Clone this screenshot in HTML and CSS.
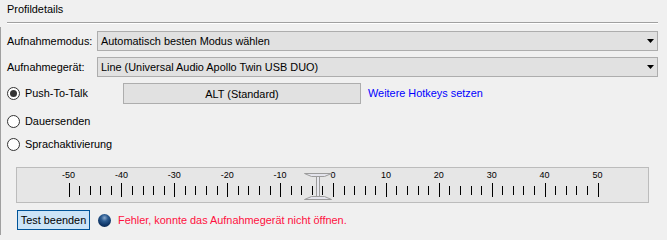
FILE: index.html
```html
<!DOCTYPE html>
<html lang="de">
<head>
<meta charset="utf-8">
<title>Profildetails</title>
<link rel="stylesheet" href="styles.css">
</head>
<body>
<div class="window">
  <div class="group-title">Profildetails</div>
  <div class="group-body">
    <div class="field-row">
      <span class="field-label">Aufnahmemodus:</span>
      <div class="combo">
        <span class="combo-text">Automatisch besten Modus wählen</span>
        <svg class="combo-arrow" width="7" height="4" viewBox="0 0 7 4"><path d="M0 0H7L3.5 4Z" fill="#000"/></svg>
      </div>
    </div>
    <div class="field-row">
      <span class="field-label">Aufnahmegerät:</span>
      <div class="combo">
        <span class="combo-text">Line (Universal Audio Apollo Twin USB DUO)</span>
        <svg class="combo-arrow" width="7" height="4" viewBox="0 0 7 4"><path d="M0 0H7L3.5 4Z" fill="#000"/></svg>
      </div>
    </div>
    <div class="radio-row ptt">
      <label class="radio"><span class="radio-circle checked"></span>Push-To-Talk</label>
      <button class="hotkey-btn" type="button">ALT (Standard)</button>
      <a class="link" href="#">Weitere Hotkeys setzen</a>
    </div>
    <div class="radio-row cont">
      <label class="radio"><span class="radio-circle"></span>Dauersenden</label>
    </div>
    <div class="radio-row voice">
      <label class="radio"><span class="radio-circle"></span>Sprachaktivierung</label>
    </div>
    <div class="meter">
      <svg class="scale" width="631" height="34" viewBox="0 0 631 34">
        <g class="scale-labels" font-size="9" text-anchor="middle" fill="#000">
          <text x="51.5" y="10">-50</text>
          <text x="104.4" y="10">-40</text>
          <text x="157.3" y="10">-30</text>
          <text x="210.2" y="10">-20</text>
          <text x="263.1" y="10">-10</text>
          <text x="316" y="10">0</text>
          <text x="368.9" y="10">10</text>
          <text x="421.8" y="10">20</text>
          <text x="474.7" y="10">30</text>
          <text x="527.6" y="10">40</text>
          <text x="580.5" y="10">50</text>
        </g>
        <g id="ticks" stroke="#000" stroke-width="1"></g>
        <g class="slider">
          <path d="M287.5 5.5H314.5L307.5 8.5H294.5Z" fill="#e4e4ec" stroke="#9c9c9c"/>
          <rect x="299.5" y="8.5" width="3" height="20" fill="#e8e8ee" stroke="#9c9c9c"/>
          <path d="M294.5 28.5H307.5L314.5 31.5H287.5Z" fill="#e4e4ec" stroke="#9c9c9c"/>
        </g>
      </svg>
    </div>
    <div class="status-row">
      <button class="test-btn" type="button">Test beenden</button>
      <span class="led"></span>
      <span class="error">Fehler, konnte das Aufnahmegerät nicht öffnen.</span>
    </div>
  </div>
</div>
<script>
  (function () {
    var g = document.getElementById('ticks');
    var ns = 'http://www.w3.org/2000/svg';
    var start = 51.5, step = 52.9 / 5;
    for (var i = 0; i <= 50; i++) {
      var x = Math.round(start + i * step) + 0.5;
      var major = i % 5 === 0;
      var l = document.createElementNS(ns, 'line');
      l.setAttribute('x1', x); l.setAttribute('x2', x);
      l.setAttribute('y1', major ? 15 : 18);
      l.setAttribute('y2', major ? 29 : 27);
      g.appendChild(l);
    }
  })();
</script>
</body>
</html>
```

FILE: styles.css
```css
html, body {
  margin: 0;
  padding: 0;
  background: #f0f0f0;
}
body {
  width: 667px;
  height: 239px;
  overflow: hidden;
  font-family: "Liberation Sans", Arial, sans-serif;
  font-size: 10.9px;
  color: #000;
  white-space: nowrap;
}
.window {
  display: flex;
  flex-direction: column;
}
.group-title {
  box-sizing: border-box;
  height: 23px;
  margin: 0 9px 0 7px;
  padding-top: 2px;
  line-height: 15px;
  border-bottom: 1px solid #a0a0a0;
  box-shadow: 0 1px 0 #ffffff;
}
.group-body {
  margin-top: 4px;
  border-left: 1px solid #a0a0a0;
  padding: 4px 9px 0 6px;
  display: flex;
  flex-direction: column;
  height: 208px;
  box-sizing: border-box;
}
.field-row {
  display: flex;
  align-items: center;
  height: 20px;
}
.field-row + .field-row {
  margin-top: 6px;
}
.field-label {
  width: 90px;
  flex: none;
  line-height: 15px;
}
.combo {
  flex: 1;
  box-sizing: border-box;
  height: 20px;
  background: #e1e1e1;
  border: 1px solid #adadad;
  display: flex;
  align-items: center;
  padding: 0 1px 0 3px;
}
.combo-text {
  flex: 1;
  line-height: 15px;
}
.combo-arrow {
  margin-right: 2px;
  flex: none;
}
.radio-row {
  display: flex;
  align-items: center;
  height: 20px;
}
.radio-row.ptt {
  margin-top: 6px;
  height: 21px;
}
.radio-row.cont {
  margin-top: 7px;
}
.radio-row.voice {
  margin-top: 3px;
}
.radio {
  display: flex;
  align-items: center;
  width: 116px;
  flex: none;
  line-height: 15px;
}
.radio-circle {
  box-sizing: border-box;
  flex: none;
  width: 13px;
  height: 13px;
  border: 1px solid #333333;
  border-radius: 50%;
  background: #ffffff;
  margin-right: 5px;
  display: flex;
  align-items: center;
  justify-content: center;
}
.radio-circle.checked::after {
  content: "";
  width: 7px;
  height: 7px;
  border-radius: 50%;
  background: #333333;
}
.hotkey-btn {
  box-sizing: border-box;
  flex: none;
  width: 238px;
  height: 21px;
  background: #e1e1e1;
  border: 1px solid #adadad;
  font: inherit;
  color: #000;
  padding: 0;
  margin: 0;
}
.link {
  margin-left: 7px;
  color: #0000ff;
  text-decoration: none;
  line-height: 15px;
}
.meter {
  margin: 13px 9px 0 9px;
  box-sizing: border-box;
  height: 36px;
  border: 1px solid #bcbcbc;
  background: #e6e6e6;
}
.scale {
  display: block;
}
.scale-labels {
  font-family: "Liberation Sans", sans-serif;
}
.status-row {
  margin-top: 7px;
  display: flex;
  align-items: center;
  height: 20px;
}
.test-btn {
  box-sizing: border-box;
  flex: none;
  margin: 0 0 0 10px;
  width: 73px;
  height: 20px;
  padding: 0;
  background: #cce4f7;
  border: 1px solid #005499;
  font: inherit;
  color: #000;
  white-space: nowrap;
}
.led {
  flex: none;
  width: 13px;
  height: 13px;
  border-radius: 50%;
  margin-left: 8px;
  background: radial-gradient(circle at 50% 30%, #8aa9cc 0%, #2c5c91 30%, #0e3566 65%, #081d3d 100%);
}
.error {
  margin-left: 7px;
  color: #ff1040;
  line-height: 15px;
}
```
